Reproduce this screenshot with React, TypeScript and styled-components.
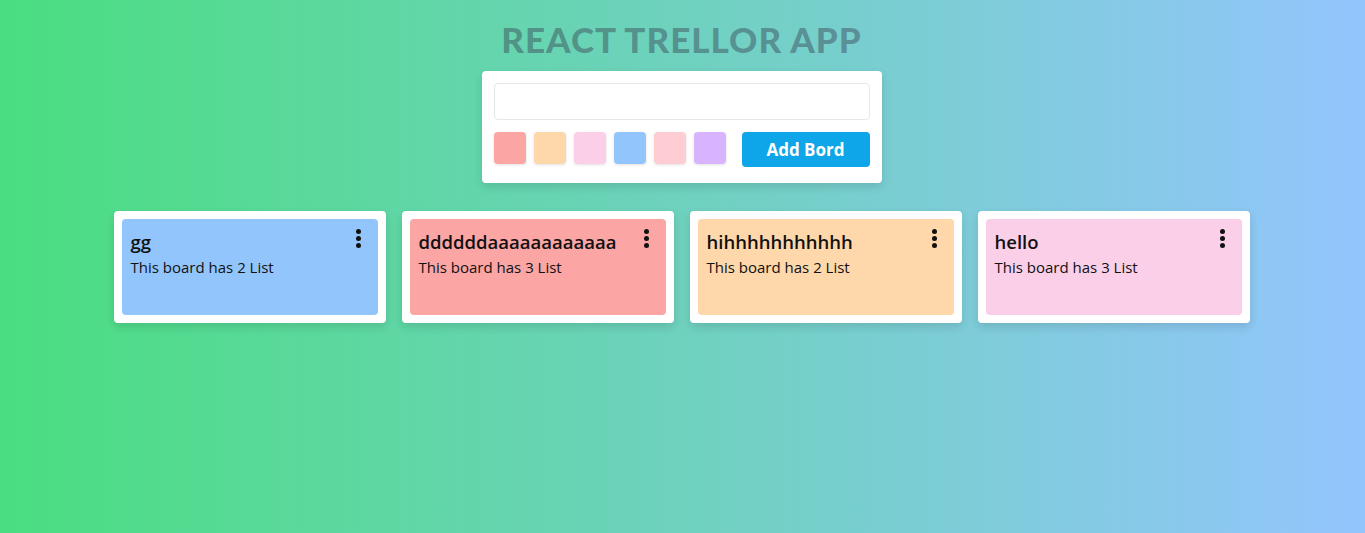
import React from "react";
import styled, { createGlobalStyle } from "styled-components";

const Global = createGlobalStyle`
  html, body { margin: 0; padding: 0; }
  body {
    font-family: "Open Sans", "Noto Sans", sans-serif;
    background: linear-gradient(to right, #4ade80, #93c5fd);
    min-height: 533px;
  }
  * { box-sizing: border-box; }
`;

const Page = styled.div`
  min-height: 533px;
  display: flex;
  flex-direction: column;
  align-items: center;
  padding-top: 18px;
  padding-right: 2px;
`;

const Title = styled.h1`
  margin: 0;
  font-family: Lato, "Open Sans", sans-serif;
  font-weight: 900;
  font-size: 35px;
  line-height: 42px;
  color: rgba(55, 65, 81, 0.45);
  letter-spacing: 1px;
`;

const FormCard = styled.div`
  margin-top: 11px;
  width: 400px;
  background: #fff;
  border-radius: 4px;
  padding: 12px;
  display: flex;
  flex-direction: column;
  gap: 12px;
  box-shadow: 0 4px 10px rgba(0, 0, 0, 0.12);
`;

const Input = styled.input`
  height: 37px;
  width: 100%;
  border: 1px solid #e5e7eb;
  border-radius: 4px;
  outline: none;
  font-size: 16px;
  padding: 0 10px;
`;

const Row = styled.div`
  display: flex;
  align-items: flex-start;
  justify-content: space-between;
  height: 39px;
`;

const Swatches = styled.div`
  display: flex;
  gap: 8px;
`;

const Swatch = styled.div<{ $c: string }>`
  width: 32px;
  height: 32px;
  border-radius: 4px;
  background: ${(p) => p.$c};
  box-shadow: 0 1px 3px rgba(0, 0, 0, 0.12);
`;

const AddButton = styled.button`
  width: 128px;
  height: 35px;
  border: none;
  border-radius: 4px;
  background: #0ea5e9;
  color: #fff;
  font-family: "Open Sans", sans-serif;
  font-weight: 700;
  font-size: 17px;
  cursor: pointer;
`;

const Boards = styled.div`
  margin-top: 28px;
  display: flex;
  gap: 16px;
`;

const BoardCard = styled.div`
  width: 272px;
  height: 112px;
  background: #fff;
  border-radius: 4px;
  padding: 8px;
  box-shadow: 0 4px 10px rgba(0, 0, 0, 0.12);
`;

const BoardInner = styled.div<{ $c: string }>`
  height: 100%;
  background: ${(p) => p.$c};
  border-radius: 4px;
  padding: 9px 8px 9px 9px;
  display: flex;
  justify-content: space-between;
  align-items: flex-start;
`;

const BoardText = styled.div`
  display: flex;
  flex-direction: column;
`;

const BoardTitle = styled.div`
  font-size: 18.5px;
  font-weight: 600;
  line-height: 28px;
  color: #111;
`;

const BoardSub = styled.div`
  font-size: 15px;
  line-height: 22px;
  color: #111;
`;

const DotsButton = styled.div`
  display: flex;
  flex-direction: column;
  gap: 2px;
  padding-top: 1px;
  padding-right: 9px;
`;

const Dot = styled.span`
  width: 5px;
  height: 5px;
  border-radius: 50%;
  background: #111;
`;

const Dots = () => (
  <DotsButton>
    <Dot />
    <Dot />
    <Dot />
  </DotsButton>
);

const swatches = ["#fca5a5", "#fed7aa", "#fbcfe8", "#93c5fd", "#fecdd3", "#d8b4fe"];

const boards = [
  { title: "gg", lists: 2, color: "#93c5fd" },
  { title: "ddddddaaaaaaaaaaaa", lists: 3, color: "#fca5a5" },
  { title: "hihhhhhhhhhhh", lists: 2, color: "#fed7aa" },
  { title: "hello", lists: 3, color: "#fbcfe8" },
];

export default function App() {
  return (
    <>
      <Global />
      <Page>
        <Title>REACT TRELLOR APP</Title>
        <FormCard>
          <Input />
          <Row>
            <Swatches>
              {swatches.map((c) => (
                <Swatch key={c} $c={c} />
              ))}
            </Swatches>
            <AddButton>Add Bord</AddButton>
          </Row>
        </FormCard>
        <Boards>
          {boards.map((b) => (
            <BoardCard key={b.title}>
              <BoardInner $c={b.color}>
                <BoardText>
                  <BoardTitle>{b.title}</BoardTitle>
                  <BoardSub>This board has {b.lists} List</BoardSub>
                </BoardText>
                <Dots />
              </BoardInner>
            </BoardCard>
          ))}
        </Boards>
      </Page>
    </>
  );
}
